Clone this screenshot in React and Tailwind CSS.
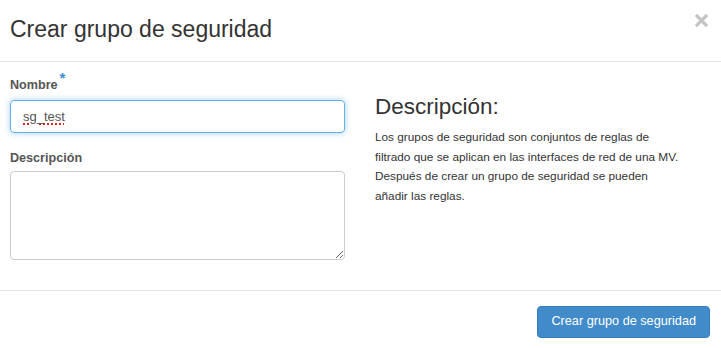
import React from "react";

export default function App() {
  return (
    <div className="w-[721px] h-[348px] bg-white font-['Liberation_Sans',Arial,sans-serif] text-[#333] overflow-hidden">
      {/* Header */}
      <div className="h-[62px] border-b border-[#e5e5e5] flex items-center justify-between pl-[10px] pr-[13px]">
        <h4 className="text-[23px] leading-none text-[#333] -mt-[2px]">Crear grupo de seguridad</h4>
        <svg width="13" height="13" viewBox="0 0 13 13" className="-mt-[20px]">
          <path d="M2 2 L11 11 M11 2 L2 11" stroke="#c4c4c4" strokeWidth="3.2" strokeLinecap="square" />
        </svg>
      </div>

      {/* Body */}
      <div className="h-[228px] flex pl-[10px] pt-[13px]">
        <div className="w-[335px]">
          <div className="flex items-start h-[20px]">
            <span className="text-[12.6px] font-bold text-[#555] leading-[20px]">Nombre</span>
            <span className="text-[#3b8bd0] text-[15px] font-bold leading-[12px] ml-[2px] -mt-[3px]">*</span>
          </div>
          <div className="mt-[5px] h-[33px] border border-[#66afe9] rounded-[4px] shadow-[0_0_6px_rgba(102,175,233,0.6)] flex items-center pl-[12px]">
            <span className="text-[13px] text-[#555] underline decoration-dotted decoration-[#e02020] decoration-2 underline-offset-[3px]">sg_test</span>
          </div>
          <div className="mt-[12px] h-[20px]">
            <span className="text-[12.6px] font-bold text-[#555] leading-[20px]">Descripción</span>
          </div>
          <textarea
            className="mt-[6px] block w-full h-[89px] border border-[#ccc] rounded-[4px] outline-none"
            defaultValue=""
          />
        </div>
        <div className="ml-[30px] pt-[19px]">
          <div className="text-[22.5px] leading-[26px] text-[#333]">Descripción:</div>
          <p className="mt-[8px] text-[11.8px] leading-[19.5px] text-[#333] whitespace-nowrap">
            Los grupos de seguridad son conjuntos de reglas de
            <br />
            filtrado que se aplican en las interfaces de red de una MV.
            <br />
            Después de crear un grupo de seguridad se pueden
            <br />
            añadir las reglas.
          </p>
        </div>
      </div>

      {/* Footer */}
      <div className="border-t border-[#e5e5e5] flex justify-end pr-[11px] pt-[15px]">
        <button className="h-[32px] px-[13px] bg-[#428bca] border border-[#357ebd] rounded-[4px] text-white text-[12.7px]">
          Crear grupo de seguridad
        </button>
      </div>
    </div>
  );
}
